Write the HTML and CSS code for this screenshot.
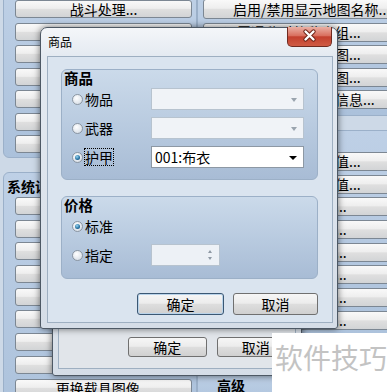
FILE: index.html
```html
<!DOCTYPE html>
<html lang="zh-CN">
<head>
  <meta charset="UTF-8">
  <title>商品</title>
  <link rel="stylesheet" href="styles.css">
</head>
<body>

<div class="desk">
  <div class="col-left">
    <div class="panel panel-l1">
      <div class="stack">
        <div class="bg-btn">战斗处理...</div>
        <div class="bg-btn"></div>
        <div class="bg-btn"></div>
        <div class="bg-btn"></div>
        <div class="bg-btn"></div>
        <div class="bg-btn"></div>
        <div class="bg-btn"></div>
      </div>
    </div>
    <div class="panel panel-l2">
      <div class="panel-title">系统设置</div>
      <div class="stack">
        <div class="bg-btn"></div>
        <div class="bg-btn"></div>
        <div class="bg-btn"></div>
        <div class="bg-btn"></div>
        <div class="bg-btn"></div>
        <div class="bg-btn"></div>
        <div class="bg-btn"></div>
        <div class="bg-btn"></div>
        <div class="bg-btn">更换载具图像...</div>
      </div>
    </div>
  </div>

  <div class="col-right">
    <div class="panel panel-r1">
      <div class="stack">
        <div class="bg-btn first">启用/禁用显示地图名称...</div>
        <div class="bg-btn">设置遇敌时的敌人组...</div>
        <div class="bg-btn">更改战斗背景远景图...</div>
        <div class="bg-btn">更改地图显示远景图...</div>
        <div class="bg-btn">获取地图指定位置信息...</div>
      </div>
    </div>
    <div class="panel panel-r2">
      <div class="panel-title"></div>
      <div class="stack">
        <div class="bg-btn">增减角色全体能力值...</div>
        <div class="bg-btn">增减角色的经验数值...</div>
        <div class="bg-btn">更改角色职业名称...</div>
        <div class="bg-btn">更改角色全部装备...</div>
        <div class="bg-btn">更改角色行走图像...</div>
        <div class="bg-btn">更改角色脸部图像...</div>
        <div class="bg-btn">更改角色战斗图像...</div>
        <div class="bg-btn">更改角色全部状态...</div>
        <div class="bg-btn"></div>
      </div>
    </div>
    <div class="panel panel-r3">
      <div class="panel-title">高级</div>
    </div>
  </div>
</div>

<!-- dialog behind -->
<div class="window back-window">
  <div class="titlebar"></div>
  <div class="client">
    <div class="actions">
      <div class="btn">确定</div>
      <div class="btn">取消</div>
    </div>
  </div>
</div>

<!-- 商品 dialog -->
<div class="window main-window">
  <div class="titlebar">商品</div>
  <div class="close">
    <svg width="45" height="20" viewBox="0 0 45 20">
      <path d="M18.5 5.5 L26.5 13.5 M26.5 5.5 L18.5 13.5" stroke="#6e2418" stroke-width="4.4" stroke-linecap="round"/>
      <path d="M18.5 5.5 L26.5 13.5 M26.5 5.5 L18.5 13.5" stroke="#ffffff" stroke-width="2.4" stroke-linecap="round"/>
    </svg>
  </div>
  <div class="client">
    <div class="group">
      <div class="group-title">商品</div>
      <div class="rows">
        <div class="row">
          <div class="choice"><span class="radio"></span><span>物品</span></div>
          <div class="combo disabled"></div>
        </div>
        <div class="row">
          <div class="choice"><span class="radio"></span><span>武器</span></div>
          <div class="combo disabled"></div>
        </div>
        <div class="row">
          <div class="choice"><span class="radio on"></span><span class="focus">护甲</span></div>
          <div class="combo">001:布衣</div>
        </div>
      </div>
    </div>

    <div class="group group-price">
      <div class="group-title">价格</div>
      <div class="rows">
        <div class="row">
          <div class="choice"><span class="radio on"></span><span>标准</span></div>
        </div>
        <div class="row">
          <div class="choice"><span class="radio"></span><span>指定</span></div>
          <div class="spin"></div>
        </div>
      </div>
    </div>

    <div class="actions">
      <div class="btn default">确定</div>
      <div class="btn">取消</div>
    </div>
  </div>
</div>

<div class="watermark">软件技巧</div>

</body>
</html>
```

FILE: styles.css
```css
* {
  box-sizing: border-box;
}

body {
  margin: 0;
  width: 387px;
  height: 392px;
  overflow: hidden;
  position: relative;
  background: #cdd9e7;
  font-family: "Noto Sans CJK SC", "Noto Sans", sans-serif;
  font-size: 14px;
  color: #000;
}

/* background editor window */
.desk {
  display: flex;
  height: 100%;
}

.col-left {
  width: 197px;
  flex: none;
  padding-left: 3px;
}

.col-right {
  width: 240px;
  flex: none;
}

.panel {
  background: linear-gradient(180deg, #bed0e6, #abc1db);
  border: 1px solid #9bb0c9;
  border-radius: 6px;
}

.stack {
  display: flex;
  flex-direction: column;
  gap: 4.5px;
}

.panel-title {
  font-weight: bold;
  line-height: 16px;
  height: 16px;
  white-space: nowrap;
}

.panel-l1 {
  margin-top: -9px;
  padding: 8px 4px 4px 11px;
}

.panel-l2 {
  margin-top: 14px;
  padding: 5px 4px 6px 3px;
  height: 260px;
}

.panel-l2 .stack {
  margin: 3px 0 0 8px;
  gap: 4.7px;
}

.panel-r1 {
  margin-top: -10px;
  padding: 8px 0 6px 5px;
}

.panel-r1 .stack {
  gap: 3.6px;
}

.panel-r2 {
  margin-top: 14px;
  padding: 3px 0 6px 5px;
}

.panel-r2 .stack {
  margin-top: 1.6px;
  gap: 3.7px;
}

.panel-r3 {
  margin-top: 12px;
  padding: 5px 0 0 5px;
  height: 40px;
}

.panel-r3 .panel-title {
  margin-left: 14px;
}

.bg-btn {
  height: 18px;
  border: 1px solid #7c8793;
  border-radius: 3px;
  background: linear-gradient(180deg, #f9f9f9 0%, #eeeeee 46%, #dfdfdf 52%, #d2d4d6 100%);
  line-height: 16px;
  text-align: center;
  white-space: nowrap;
  overflow: hidden;
}

.col-right .bg-btn {
  height: 19px;
  line-height: 17px;
  text-align: left;
  padding-left: 19px;
}

.col-right .bg-btn.first {
  height: 20px;
  line-height: 18px;
  padding-left: 29px;
}

/* dialogs */
.window {
  position: absolute;
  display: flex;
  flex-direction: column;
  border: 1px solid #4d5864;
  border-radius: 7px 7px 3px 3px;
  background: linear-gradient(180deg, #f4f6f9 0px, #e4eaf1 28px, #d5dde7 100%);
  box-shadow: 0 0 7px rgba(0, 0, 0, 0.55);
}

.titlebar {
  height: 28px;
  flex: none;
  padding: 7px 0 0 1px;
  font-size: 12px;
  line-height: 14px;
}

.client {
  flex: 1;
  border: 1px solid #9eafc1;
}

.main-window {
  left: 40px;
  top: 27px;
  width: 298px;
  height: 302px;
  padding: 0 4px 5px 6px;
}

.main-window .client {
  background: #dae4ef;
  padding: 12px 14px 7px 13px;
}

.close {
  position: absolute;
  top: -1px;
  right: 5px;
  width: 45px;
  height: 20px;
  border: 1px solid #6f2a20;
  border-top: none;
  border-radius: 0 0 5px 5px;
  background: linear-gradient(180deg, #eab0a4 0%, #d9705f 45%, #c3402e 52%, #cf5b44 100%);
}

.close svg {
  display: block;
  margin: -1px 0 0 -1px;
}

.back-window {
  left: 52px;
  top: 230px;
  width: 250px;
  height: 146px;
  padding: 0 5px 6px 5px;
}

.back-window .client {
  background: #e1e5ea;
  display: flex;
  flex-direction: column;
  justify-content: flex-end;
  padding: 0 0 11px 69px;
}

.back-window .actions {
  justify-content: flex-start;
  gap: 10px;
  margin: 0;
}

.back-window .btn {
  width: 85px;
  height: 20px;
  line-height: 18px;
}

/* group boxes */
.group {
  border: 1px solid #9cb0c7;
  border-radius: 6px;
  background: linear-gradient(180deg, #cbdaea 0%, #b9cbe0 50%, #a8bcd5 100%);
  padding: 0 13px 11px 2px;
}

.group-price {
  margin-top: 16px;
  padding-bottom: 12px;
}

.group-title {
  font-weight: bold;
  font-size: 14.5px;
  line-height: 16px;
}

.rows {
  display: flex;
  flex-direction: column;
  gap: 7px;
  margin-top: 2px;
  padding-left: 8px;
}

.row {
  display: grid;
  grid-template-columns: 79px 1fr;
  align-items: center;
  height: 22px;
}

.choice {
  display: flex;
  align-items: center;
  gap: 2px;
  line-height: 16px;
}

.radio {
  position: relative;
  width: 11px;
  height: 11px;
  flex: none;
  border-radius: 50%;
  border: 1px solid #8b96a2;
  background: radial-gradient(circle at 40% 35%, #ffffff, #e2e7ed 60%, #c8d1db);
}

.radio.on::after {
  content: "";
  position: absolute;
  left: 2px;
  top: 2px;
  width: 5px;
  height: 5px;
  border-radius: 50%;
  background: radial-gradient(circle at 40% 35%, #9ad6f2, #236f9f 60%, #113f63);
}

.focus {
  outline: 1px dotted #000;
  outline-offset: 0;
}

.combo {
  position: relative;
  height: 22px;
  border: 1px solid #8d98a4;
  background: #fff;
  padding-left: 3px;
  line-height: 20px;
  font-size: 14px;
}

.combo::after {
  content: "";
  position: absolute;
  right: 6px;
  top: 9px;
  border-left: 4px solid transparent;
  border-right: 4px solid transparent;
  border-top: 4px solid #000;
}

.combo.disabled {
  background: #f0f3f7;
  border-color: #b7c3cf;
}

.combo.disabled::after {
  border-top-color: #9aa4ae;
  border-left-width: 3.5px;
  border-right-width: 3.5px;
}

.spin {
  position: relative;
  width: 69px;
  height: 22px;
  border: 1px solid #b7c3cf;
  background: #edf1f6;
}

.spin::before,
.spin::after {
  content: "";
  position: absolute;
  right: 7px;
  border-left: 2.5px solid transparent;
  border-right: 2.5px solid transparent;
}

.spin::before {
  top: 5px;
  border-bottom: 3px solid #8f99a4;
}

.spin::after {
  bottom: 5px;
  border-top: 3px solid #8f99a4;
}

.actions {
  display: flex;
  justify-content: flex-end;
  gap: 9px;
  margin-top: 14px;
}

.btn {
  width: 85px;
  height: 22px;
  border: 1px solid #707070;
  border-radius: 3px;
  background: linear-gradient(180deg, #f6f6f6 0%, #ececec 46%, #dddddd 52%, #d0d0d0 100%);
  text-align: center;
  line-height: 20px;
  font-size: 14px;
}

.btn.default {
  width: 87px;
  border-color: #3b5874;
  box-shadow: inset 0 0 0 1px #b9d3ea;
}

.watermark {
  position: absolute;
  left: 272px;
  top: 333px;
  right: 0;
  bottom: 0;
  background: #fff;
  color: #c3c3c3;
  font-size: 28px;
  line-height: 28px;
  padding: 10px 0 0 3px;
  white-space: nowrap;
}
```
